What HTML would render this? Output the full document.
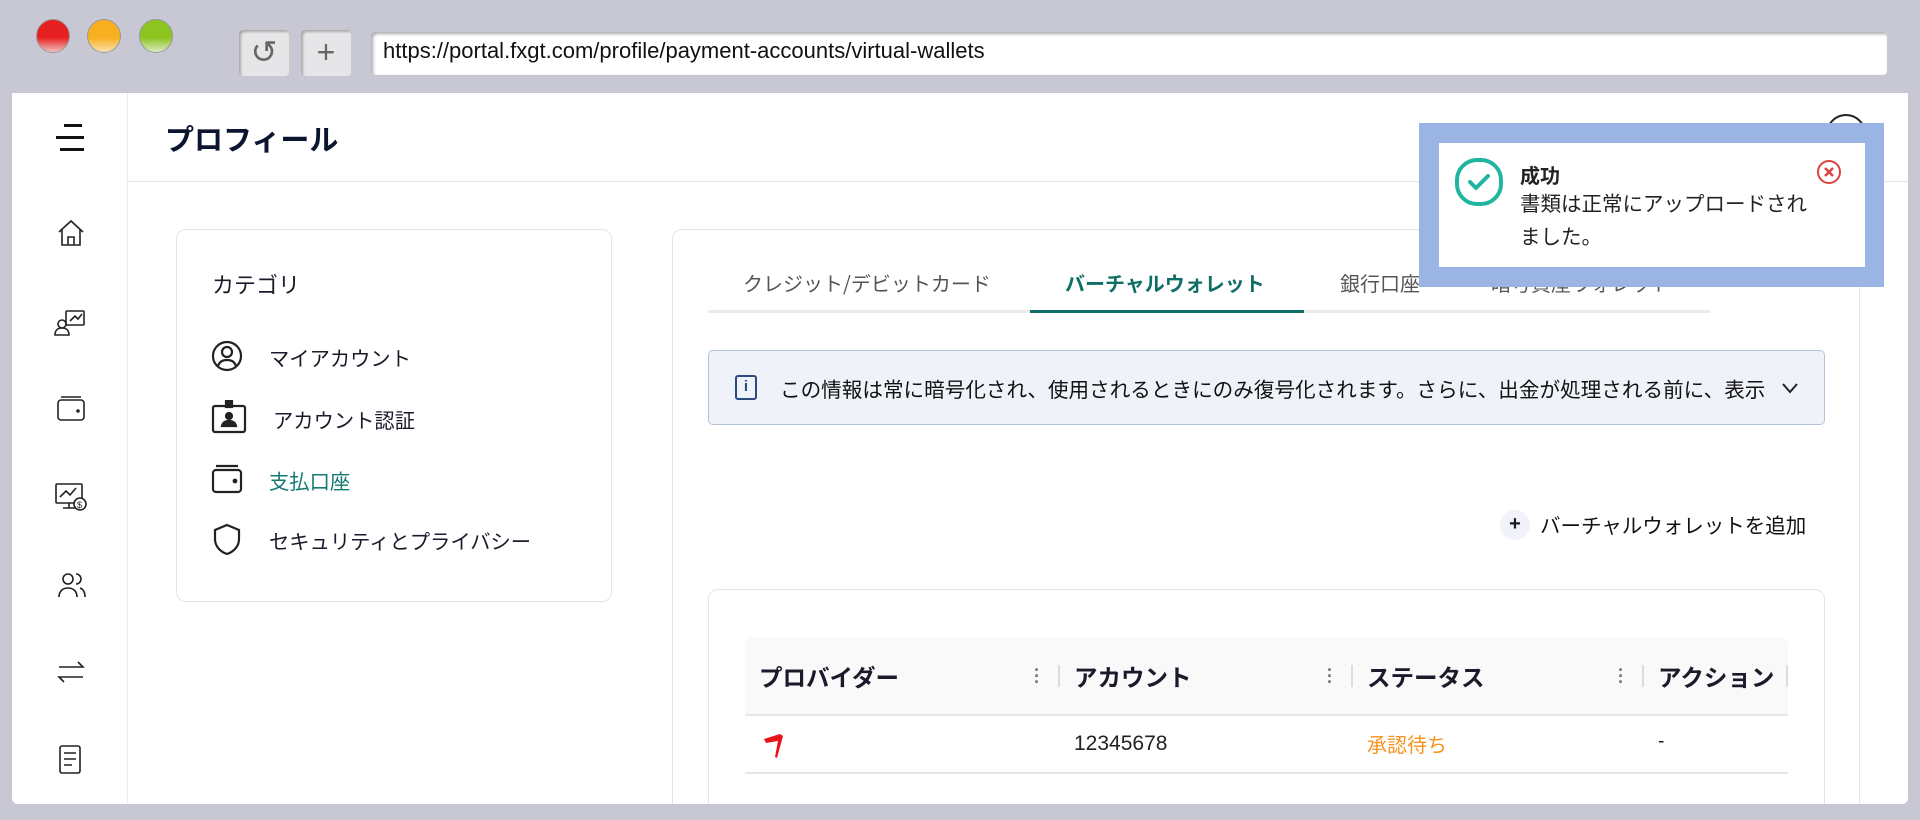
<!DOCTYPE html>
<html><head><meta charset="utf-8"><style>
*{margin:0;padding:0;box-sizing:border-box}
html,body{width:1920px;height:820px;overflow:hidden}
body{background:#c8c8d4;position:relative;font-family:"Liberation Sans","Noto Sans CJK JP",sans-serif;color:#1a1a2a}
.a{position:absolute;white-space:nowrap}
.dot{position:absolute;width:34px;height:34px;border-radius:50%;top:19px;border:1px solid #999}
.btn{position:absolute;top:30px;height:46px;width:50px;background:#e6e6e8;border-radius:4px;box-shadow:inset 2px 2px 2px #aaa;color:#666;font-size:32px;text-align:center;line-height:44px}
.jp{font-family:"Noto Sans CJK JP",sans-serif}
.ic{position:absolute;stroke:#222;fill:none;stroke-width:1.6}
#c{position:absolute;left:12px;top:93px;width:1896px;height:711px;background:#fff;border-radius:0 0 6px 6px;overflow:hidden}
#c>*{transform:translate(-12px,-93px)}
</style></head><body>
<div class="dot" style="left:36px;background:linear-gradient(#e62020 55%,#f3c0c0)"></div>
<div class="dot" style="left:87px;background:linear-gradient(#f8b020 55%,#f8e0b0)"></div>
<div class="dot" style="left:139px;background:linear-gradient(#8cc420 55%,#d8ecc0)"></div>
<div class="btn" style="left:239px">↺</div>
<div class="btn" style="left:301px">+</div>
<div class="a" style="left:371px;top:32px;width:1516px;height:43px;background:#fff;border-radius:4px;box-shadow:inset 2px 2px 3px #aaa"></div>
<div class="a" style="left:383px;top:38px;font-size:22px;color:#111">https://portal.fxgt.com/profile/payment-accounts/virtual-wallets</div>

<div id="c">
<div class="a" style="left:127px;top:93px;width:1px;height:711px;background:#ececec"></div>
<div class="a" style="left:128px;top:181px;width:1780px;height:1px;background:#e6e6e6"></div>
<div class="a" style="left:64px;top:124px;width:18px;height:3px;background:#111"></div>
<div class="a" style="left:56px;top:136px;width:28px;height:3px;background:#111"></div>
<div class="a" style="left:60px;top:148px;width:24px;height:3px;background:#111"></div>
<div class="a jp" style="left:165px;top:117px;font-size:29px;font-weight:700;color:#0b1530">プロフィール</div>
<div class="a" style="left:1826px;top:114px;width:40px;height:40px;border:2px solid #222;border-radius:50%"></div>

<svg class="ic" style="left:56px;top:218px" width="30" height="30" viewBox="0 0 30 30"><path d="M3 14L15 3l12 11M6 11v16h18V11M12 27v-8h6v8"/></svg>
<svg class="ic" style="left:54px;top:307px" width="34" height="30" viewBox="0 0 34 30"><rect x="12" y="4" width="18" height="14" rx="1"/><path d="M16 14l5-5 3 3 4-5"/><circle cx="8" cy="17" r="4"/><path d="M1 28c0-5 3-7 7-7s7 2 7 7z"/></svg>
<svg class="ic" style="left:56px;top:394px" width="30" height="30" viewBox="0 0 30 30"><rect x="2" y="6" width="26" height="20" rx="3"/><path d="M5 3h20"/><circle cx="22" cy="17" r="1" fill="#222"/></svg>
<svg class="ic" style="left:54px;top:481px" width="34" height="32" viewBox="0 0 34 32"><rect x="2" y="3" width="26" height="19" rx="1"/><path d="M6 16l6-6 4 4 6-7M15 22v5M9 27h12"/><circle cx="26" cy="23" r="6" fill="#fff"/><text x="23" y="27" font-size="9" fill="#222" stroke="none" font-family="Liberation Sans">$</text></svg>
<svg class="ic" style="left:57px;top:570px" width="30" height="30" viewBox="0 0 30 30"><circle cx="11" cy="9" r="5"/><path d="M2 27c0-6 4-9 9-9s9 3 9 9M19 4a5 5 0 010 10M23 18c3 1 5 4 5 9"/></svg>
<svg class="ic" style="left:56px;top:657px" width="30" height="30" viewBox="0 0 30 30"><path d="M3 10h24l-5-5M27 20H3l5 5"/></svg>
<svg class="ic" style="left:58px;top:744px" width="26" height="32" viewBox="0 0 26 32"><rect x="2" y="2" width="20" height="27" rx="2"/><path d="M6 9h12M6 15h12M6 21h8"/></svg>

<div class="a" style="left:176px;top:229px;width:436px;height:373px;border:1px solid #e4e4e8;border-radius:10px"></div>
<div class="a jp" style="left:212px;top:268px;font-size:22px">カテゴリ</div>
<svg class="ic" style="left:211px;top:340px;stroke-width:2.2" width="32" height="32" viewBox="0 0 32 32"><circle cx="16" cy="16" r="14"/><circle cx="16" cy="12" r="5"/><path d="M7 26c2-5 5-6 9-6s7 1 9 6"/></svg>
<svg class="ic" style="left:211px;top:400px;stroke-width:2.2" width="36" height="34" viewBox="0 0 36 34"><rect x="2" y="6" width="32" height="26" rx="2"/><rect x="15" y="1" width="6" height="6" fill="#222"/><circle cx="18" cy="16" r="3" fill="#222"/><path d="M11 26c1-4 4-5 7-5s6 1 7 5z" fill="#222"/></svg>
<svg class="ic" style="left:211px;top:464px;stroke-width:2.2" width="32" height="30" viewBox="0 0 32 30"><rect x="2" y="6" width="28" height="22" rx="3"/><path d="M5 2h22"/><circle cx="24" cy="17" r="1.3" fill="#222"/></svg>
<svg class="ic" style="left:212px;top:523px;stroke-width:2.2" width="30" height="32" viewBox="0 0 30 32"><path d="M15 2l12 5v9c0 8-6 13-12 15C9 29 3 24 3 16V7z"/></svg>
<div class="a jp" style="left:269px;top:342px;font-size:20.3px">マイアカウント</div>
<div class="a jp" style="left:273px;top:404px;font-size:20.3px">アカウント認証</div>
<div class="a jp" style="left:269px;top:465px;font-size:20.3px;color:#147a72">支払口座</div>
<div class="a jp" style="left:269px;top:525px;font-size:20.3px">セキュリティとプライバシー</div>

<div class="a" style="left:672px;top:229px;width:1188px;height:620px;border:1px solid #e4e4e8;border-radius:10px"></div>
<div class="a" style="left:708px;top:310px;width:1002px;height:3px;background:#ebebeb"></div>
<div class="a" style="left:1030px;top:310px;width:274px;height:3px;background:#0f6e66"></div>
<div class="a jp" style="left:743px;top:268px;font-size:20px;color:#555">クレジット/デビットカード</div>
<div class="a jp" style="left:1065px;top:268px;font-size:20px;font-weight:700;color:#0f6e66">バーチャルウォレット</div>
<div class="a jp" style="left:1340px;top:268px;font-size:20px;color:#555">銀行口座</div>
<div class="a jp" style="left:1491px;top:268px;font-size:20px;color:#555">暗号資産ウォレット</div>

<div class="a" style="left:708px;top:350px;width:1117px;height:75px;background:#eff2f8;border:1.5px solid #b4c3da;border-radius:5px"></div>
<div class="a" style="left:735px;top:375px;width:22px;height:25px;border:2.5px solid #2a4a80;border-radius:3px;color:#2a4a80;font-size:15px;font-weight:700;text-align:center;line-height:19px">i</div>
<div class="a jp" style="left:780px;top:373px;font-size:20.6px;color:#111">この情報は常に暗号化され、使用されるときにのみ復号化されます。さらに、出金が処理される前に、表示</div>
<svg class="a" style="left:1780px;top:378px" width="20" height="20" viewBox="0 0 20 20"><path d="M3 6l7 8 7-8" stroke="#222" stroke-width="2" fill="none"/></svg>

<div class="a" style="left:1500px;top:510px;width:30px;height:30px;background:#f1f3f8;border-radius:50%;text-align:center;font-size:20px;font-weight:700;line-height:28px">+</div>
<div class="a jp" style="left:1540px;top:509px;font-size:20.5px;color:#111">バーチャルウォレットを追加</div>

<div class="a" style="left:708px;top:589px;width:1117px;height:260px;border:1px solid #e4e4e8;border-radius:10px"></div>
<div class="a" style="left:745px;top:637px;width:1043px;height:79px;background:#f9f9f9;border-radius:8px 8px 0 0;border-bottom:2px solid #e6e6e6"></div>
<div class="a jp" style="left:759px;top:659px;font-size:23.5px;font-weight:700">プロバイダー</div>
<div class="a jp" style="left:1074px;top:659px;font-size:23.5px;font-weight:700">アカウント</div>
<div class="a jp" style="left:1367px;top:659px;font-size:23.5px;font-weight:700">ステータス</div>
<div class="a jp" style="left:1658px;top:659px;font-size:23.5px;font-weight:700">アクション</div>
<div class="a" style="left:1034px;top:667px;color:#777;font-size:18px;font-weight:700;line-height:6px">·<br>·<br>·</div>
<div class="a" style="left:1327px;top:667px;color:#777;font-size:18px;font-weight:700;line-height:6px">·<br>·<br>·</div>
<div class="a" style="left:1618px;top:667px;color:#777;font-size:18px;font-weight:700;line-height:6px">·<br>·<br>·</div>
<div class="a" style="left:1058px;top:665px;width:2px;height:22px;background:#ddd"></div>
<div class="a" style="left:1351px;top:665px;width:2px;height:22px;background:#ddd"></div>
<div class="a" style="left:1642px;top:665px;width:2px;height:22px;background:#ddd"></div>
<div class="a" style="left:1786px;top:665px;width:2px;height:22px;background:#ddd"></div>
<svg class="a" style="left:763px;top:733px" width="22" height="26" viewBox="0 0 22 26"><path d="M1 6L17 1l3 2-6 22-2-1 3-16L3 10z" fill="#e8141c"/></svg>
<div class="a" style="left:1074px;top:732px;font-size:21px;color:#222">12345678</div>
<div class="a jp" style="left:1367px;top:729px;font-size:20px;color:#f7931e">承認待ち</div>
<div class="a" style="left:1658px;top:731px;font-size:19px">-</div>
<div class="a" style="left:745px;top:772px;width:1043px;height:2px;background:#e6e6e6"></div>
</div>

<div class="a" style="left:1419px;top:123px;width:465px;height:164px;background:#9ab5e3"></div>
<div class="a" style="left:1439px;top:143px;width:426px;height:124px;background:#fff"></div>
<svg class="a" style="left:1454px;top:157px" width="50" height="50" viewBox="0 0 50 50"><rect x="3" y="3" width="44" height="44" rx="20" fill="none" stroke="#1fb5a0" stroke-width="4"/><path d="M16 25l6 6 12-12" fill="none" stroke="#1fb5a0" stroke-width="4" stroke-linecap="round" stroke-linejoin="round"/></svg>
<div class="a jp" style="left:1520px;top:160px;font-size:20px;font-weight:700;color:#222">成功</div>
<div class="a jp" style="left:1520px;top:186px;font-size:20.5px;color:#222;line-height:33px">書類は正常にアップロードされ<br>ました。</div>
<svg class="a" style="left:1816px;top:159px" width="26" height="26" viewBox="0 0 26 26"><circle cx="13" cy="13" r="11" fill="none" stroke="#d9443c" stroke-width="2"/><path d="M9 9l8 8M17 9l-8 8" stroke="#d9443c" stroke-width="2.4"/></svg>
</body></html>
